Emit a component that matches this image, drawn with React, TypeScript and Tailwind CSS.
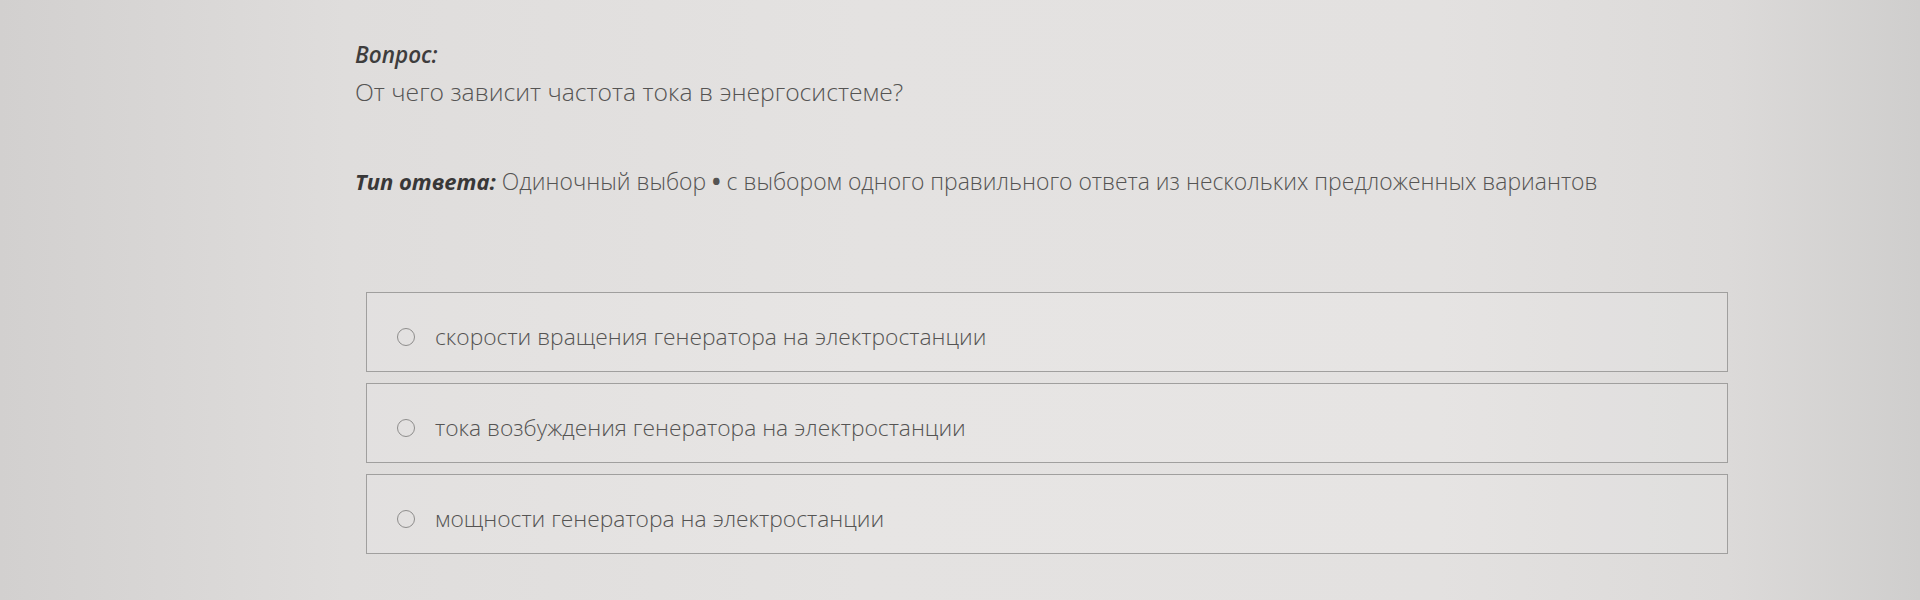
import { useState } from 'react'

const options = [
  'скорости вращения генератора на электростанции',
  'тока возбуждения генератора на электростанции',
  'мощности генератора на электростанции',
]

export default function App() {
  const [selected, setSelected] = useState<number | null>(null)

  return (
    <div className="min-h-[600px] w-full bg-[linear-gradient(90deg,#d2d0cf_0%,#dfdddc_18%,#e4e2e1_45%,#e3e1e0_75%,#dcdad9_90%,#cfcecd_100%)] font-['Open_Sans','Noto_Sans',sans-serif] font-light text-[#555453]">
      <div className="pl-[355px] pt-[41px]">
        <p className="text-[22.5px] leading-[28px] font-semibold italic text-[#3e3d3d]">Вопрос:</p>
        <p className="mt-[7px] text-[24.7px] leading-[32px]">От чего зависит частота тока в энергосистеме?</p>

        <p className="mt-[58px] text-[22.9px] leading-[30px]">
          <span className="text-[22px] font-bold italic text-[#393838]">Тип ответа:</span> Одиночный выбор <span className="font-bold">•</span> с выбором одного правильного ответа из нескольких предложенных вариантов
        </p>

        <div className="ml-[11px] mt-[95px] flex w-[1362px] flex-col gap-[11px]">
          {options.map((o, i) => (
            <label key={o} onClick={() => setSelected(i)}
              className="flex h-[80px] cursor-pointer items-center border border-[#a09f9e] bg-white/10 pl-[30px] pt-[10px]">
              <span className={`h-[18px] w-[18px] shrink-0 rounded-full border-[1.5px] border-[#8e8d8c] ${selected === i ? 'bg-[#8e8d8c]' : ''}`} />
              <span className="ml-[20px] text-[22.8px] leading-[30px]">{o}</span>
            </label>
          ))}
        </div>
      </div>
    </div>
  )
}
